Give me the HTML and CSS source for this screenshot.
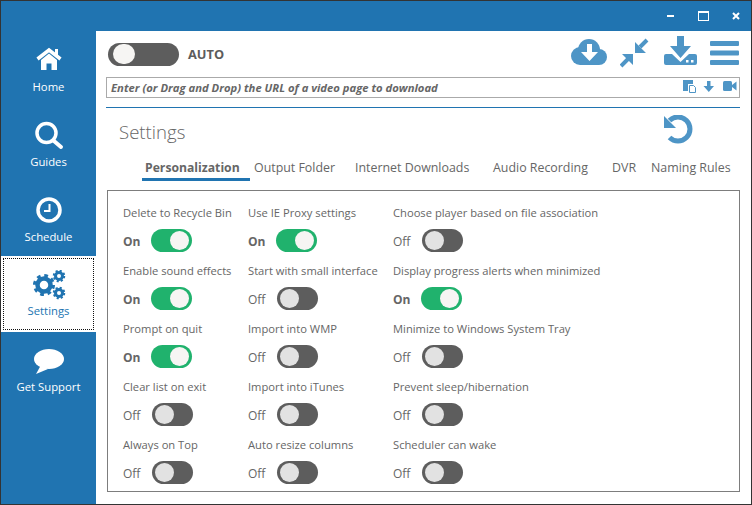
FILE: index.html
```html
<!DOCTYPE html>
<html lang="en">
<head>
<meta charset="utf-8">
<title>Settings</title>
<link rel="stylesheet" href="styles.css">
</head>
<body>
<div class="app">
  <header class="titlebar">
    <span class="win-min"></span>
    <span class="win-max"></span>
    <svg class="win-close" viewBox="0 0 8 8"><path d="M1 1l6 6M7 1L1 7"/></svg>
  </header>
  <div class="main">
    <nav class="sidebar">
      <a class="nav-item">
        <svg class="nav-icon" viewBox="32 46 34 30"><path class="fw" d="M41 60l8-6.500 8 6.500v10h-5.500v-6.500h-5V70H41z"/><path class="sw" d="M37.500 59L49 50l11.500 9"/><rect class="fw" x="55" y="49" width="3" height="6"/></svg>
        <span>Home</span>
      </a>
      <a class="nav-item">
        <svg class="nav-icon" viewBox="32 121 34 30"><circle class="sw" cx="46.500" cy="133" r="9.500"/><path class="sw round" d="M54 141l7 6"/></svg>
        <span>Guides</span>
      </a>
      <a class="nav-item">
        <svg class="nav-icon" viewBox="32 195 34 30"><circle class="sw" cx="49" cy="209" r="11"/><path class="sw thin" d="M49.500 203v7H44"/></svg>
        <span>Schedule</span>
      </a>
      <a class="nav-item active">
        <svg class="nav-icon" viewBox="32 270 34 30">
          <g class="gear big"><circle cx="44" cy="285" r="6.500"/><circle class="teeth" cx="44" cy="285" r="9.500"/></g>
          <g class="gear small"><circle cx="59" cy="276" r="3.500"/><circle class="teeth" cx="59" cy="276" r="5"/></g>
          <g class="gear small"><circle cx="59" cy="293" r="3.500"/><circle class="teeth" cx="59" cy="293" r="5"/></g>
        </svg>
        <span>Settings</span>
      </a>
      <a class="nav-item">
        <svg class="nav-icon" viewBox="32 346 34 30"><ellipse class="fw" cx="49" cy="359" rx="15" ry="10"/><path class="fw" d="M41 365l-5 9 12-5z"/></svg>
        <span>Get Support</span>
      </a>
    </nav>
    <main class="content">
      <div class="toolbar">
        <span class="toggle auto"><i></i></span>
        <b class="auto-label">AUTO</b>
        <div class="tools">
          <svg class="tool t-cloud" viewBox="570 36 36 36"><circle class="ib" cx="579" cy="56" r="9"/><circle class="ib" cx="588" cy="50" r="11"/><circle class="ib" cx="598" cy="57" r="8"/><path class="ib" d="M579 55h19v10h-19z"/><path class="iw" d="M586 44h5v8h6l-8.500 9-8.500-9h6z"/></svg>
          <svg class="tool t-shrink" viewBox="619 36 31 36"><path class="ib" d="M634 53V42l11 11zM632 54v11l-11-11z"/><path class="is" d="M639 47l7-7M627 59l-7 7"/></svg>
          <svg class="tool t-dl" viewBox="663 36 33 36"><path class="ib" d="M665 54h6l8.500 8 8.500-8h6a2 2 0 0 1 2 2v7a2 2 0 0 1-2 2h-29a2 2 0 0 1-2-2v-7a2 2 0 0 1 2-2z"/><path class="ib" d="M676 36h7v10h7l-10.500 12L669 46h7z"/><rect class="iw" x="685" y="60" width="2.500" height="2.500"/><rect class="iw" x="690" y="60" width="2.500" height="2.500"/></svg>
          <svg class="tool t-menu" viewBox="709 36 30 36"><rect class="ib" x="709" y="41" width="29" height="5" rx="1"/><rect class="ib" x="709" y="50.500" width="29" height="5" rx="1"/><rect class="ib" x="709" y="60" width="29" height="5" rx="1"/></svg>
        </div>
      </div>
      <div class="urlbar">
        <span class="url-hint">Enter (or Drag and Drop) the URL of a video page to download</span>
        <svg class="mini" viewBox="678 80 58 14"><path class="ib" d="M682 80h10v4h-5v7h-5z"/><path class="mini-page" d="M688.500 85.500h4l2 2v5h-6z"/><path class="ib" d="M706 81h3.500v5h3.500l-5.200 6-5.300-6h3.500z"/><rect class="ib" x="722" y="81" width="9" height="10" rx="1.500"/><path class="ib" d="M731 85l4.500-3.500v9L731 87z"/></svg>
      </div>
      <div class="rule"></div>
      <div class="heading">
        <h1>Settings</h1>
        <svg class="refresh" viewBox="664 115 30 30"><path class="arc" d="M669.500 137.500A12 12 0 1 0 669.500 120.500"/><path class="ib" d="M664 116v12h12z"/></svg>
      </div>
      <div class="tabs">
        <span class="tab current">Personalization</span>
        <span class="tab">Output Folder</span>
        <span class="tab">Internet Downloads</span>
        <span class="tab">Audio Recording</span>
        <span class="tab">DVR</span>
        <span class="tab">Naming Rules</span>
      </div>
      <section class="panel">
        <div class="opt"><label>Delete to Recycle Bin</label><div class="state on"><em>On</em><span class="toggle"><i></i></span></div></div>
        <div class="opt"><label>Use IE Proxy settings</label><div class="state on"><em>On</em><span class="toggle"><i></i></span></div></div>
        <div class="opt"><label>Choose player based on file association</label><div class="state"><em>Off</em><span class="toggle"><i></i></span></div></div>
        <div class="opt"><label>Enable sound effects</label><div class="state on"><em>On</em><span class="toggle"><i></i></span></div></div>
        <div class="opt"><label>Start with small interface</label><div class="state"><em>Off</em><span class="toggle"><i></i></span></div></div>
        <div class="opt"><label>Display progress alerts when minimized</label><div class="state on"><em>On</em><span class="toggle"><i></i></span></div></div>
        <div class="opt"><label>Prompt on quit</label><div class="state on"><em>On</em><span class="toggle"><i></i></span></div></div>
        <div class="opt"><label>Import into WMP</label><div class="state"><em>Off</em><span class="toggle"><i></i></span></div></div>
        <div class="opt"><label>Minimize to Windows System Tray</label><div class="state"><em>Off</em><span class="toggle"><i></i></span></div></div>
        <div class="opt"><label>Clear list on exit</label><div class="state"><em>Off</em><span class="toggle"><i></i></span></div></div>
        <div class="opt"><label>Import into iTunes</label><div class="state"><em>Off</em><span class="toggle"><i></i></span></div></div>
        <div class="opt"><label>Prevent sleep/hibernation</label><div class="state"><em>Off</em><span class="toggle"><i></i></span></div></div>
        <div class="opt"><label>Always on Top</label><div class="state"><em>Off</em><span class="toggle"><i></i></span></div></div>
        <div class="opt"><label>Auto resize columns</label><div class="state"><em>Off</em><span class="toggle"><i></i></span></div></div>
        <div class="opt"><label>Scheduler can wake</label><div class="state"><em>Off</em><span class="toggle"><i></i></span></div></div>
      </section>
    </main>
  </div>
</div>
</body>
</html>
```

FILE: styles.css
```css
* { box-sizing: border-box; }
html, body { margin: 0; padding: 0; }
body {
  width: 752px;
  height: 505px;
  overflow: hidden;
  font-family: "Open Sans", "Noto Sans", sans-serif;
  font-size: 11.2px;
  color: #666;
  background: #fff;
}
.app {
  width: 752px;
  height: 505px;
  border: 1px solid #333;
  display: flex;
  flex-direction: column;
  background: #2074b1;
}
.titlebar {
  height: 30px;
  flex: none;
  display: flex;
  align-items: flex-start;
  justify-content: flex-end;
  background: #2074b1;
}
.win-min { width: 7px; height: 2px; background: #fff; margin: 14px 24px 0 0; }
.win-max { width: 11px; height: 10px; border: 1px solid #fff; border-top-width: 2px; margin: 10px 23px 0 0; }
.win-close { width: 8px; height: 8px; margin: 11px 11px 0 0; }
.win-close path { stroke: #fff; stroke-width: 2; fill: none; }
.main { flex: 1; display: flex; min-height: 0; }
.sidebar { width: 95px; flex: none; background: #2074b1; }
.nav-item {
  height: 75px;
  display: flex;
  flex-direction: column;
  align-items: center;
  color: #fff;
  padding-top: 15px;
  font-size: 11.3px;
  line-height: 16px;
}
.nav-icon { width: 34px; height: 30px; margin-bottom: 3px; }
.nav-item.active {
  height: 76px;
  margin-bottom: -1px;
  background: #fff;
  color: #2074b1;
  outline: 1px dotted #111;
  outline-offset: -3px;
  position: relative;
  padding-top: 14px;
}
.fw { fill: #fff; }
.sw { fill: none; stroke: #fff; stroke-width: 3.500; }
.sw.round { stroke-width: 4; stroke-linecap: round; }
.sw.thin { stroke-width: 2; }
.gear circle { fill: none; stroke: #2074b1; stroke-width: 4.500; }
.gear .teeth { stroke-width: 3; }
.big .teeth { stroke-dasharray: 3.700 3.760; }
.small circle { stroke-width: 3; }
.small .teeth { stroke-width: 2.500; stroke-dasharray: 2 1.930; }
.content {
  flex: 1;
  min-width: 0;
  background: #fff;
  padding: 0 11px 0 10px;
  display: flex;
  flex-direction: column;
}
.toolbar {
  height: 46px;
  flex: none;
  display: flex;
  align-items: center;
}
.toggle {
  width: 41px;
  height: 23px;
  flex: none;
  border-radius: 12px;
  background: #5d5d5d;
  display: inline-flex;
  align-items: center;
  padding: 0 3px;
}
.toggle i {
  display: block;
  width: 19px;
  height: 19px;
  border-radius: 50%;
  background: #e2e2e2;
}
.toggle.auto { width: 71px; margin: 0 0 0 2px; padding: 0 5px; }
.toggle.auto i { width: 22px; height: 20px; background: #f6f5f3; border-radius: 11px; }
.auto-label { margin-left: 9px; font-size: 12.800px; line-height: 18px; color: #5c5c5c; }
.tools { margin-left: auto; display: flex; gap: 13px; height: 36px; }
.tool { height: 36px; display: block; }
.t-cloud { width: 36px; }
.t-shrink { width: 31px; }
.t-dl { width: 33px; }
.t-menu { width: 30px; }
.ib { fill: #4e95c6; }
.iw { fill: #fff; }
.is { fill: none; stroke: #4e95c6; stroke-width: 4; }
.urlbar {
  height: 21px;
  flex: none;
  border: 1px solid #aaa;
  display: flex;
  align-items: center;
  justify-content: space-between;
  padding: 0 3px 0 4px;
}
.url-hint { font-weight: 700; font-style: italic; font-size: 11.25px; color: #666; }
.mini { width: 58px; height: 14px; align-self: flex-start; margin-top: 2px; margin-right: -1px; }
.mini-page { fill: #fff; stroke: #4e95c6; stroke-width: 1; }
.rule { height: 1px; flex: none; margin-top: 9px; background: #2074b1; }
.heading {
  height: 49px;
  flex: none;
  display: flex;
  justify-content: space-between;
  padding: 7px 46px 0 13px;
}
.heading h1 { margin: 0; font-size: 18.6px; font-weight: 300; line-height: 34px; color: #666; }
.refresh { width: 30px; height: 30px; }
.arc { fill: none; stroke: #4e95c6; stroke-width: 5; }
.tabs {
  height: 23px;
  flex: none;
  display: grid;
  grid-template-columns: 109px 101px 138px 119px 39px auto;
  margin-left: 36px;
  padding-top: 1px;
  line-height: 20px;
  font-size: 12.4px;
}
.tab { padding-left: 3px; white-space: nowrap; }
.tab.current { font-size: 12.2px; font-weight: 700; border-bottom: 3px solid #2074b1; margin-right: 1px; }
.panel {
  margin: 10px 0 0 1px;
  height: 302px;
  flex: none;
  border: 1px solid #7d7d7d;
  padding: 13px 0 0 15px;
  display: grid;
  grid-template-columns: 125px 145px 1fr;
  grid-auto-rows: 58px;
}
.opt label { display: block; height: 18px; line-height: 18px; white-space: nowrap; }
.state { margin-top: 7px; display: flex; align-items: center; }
.state em { width: 29px; font-style: normal; font-size: 12px; padding-top: 1px; }
.state.on em { width: 28px; font-weight: 700; }
.state.on .toggle { background: #20b26d; justify-content: flex-end; }
.state.on .toggle i { background: #f6f5f3; }
```
